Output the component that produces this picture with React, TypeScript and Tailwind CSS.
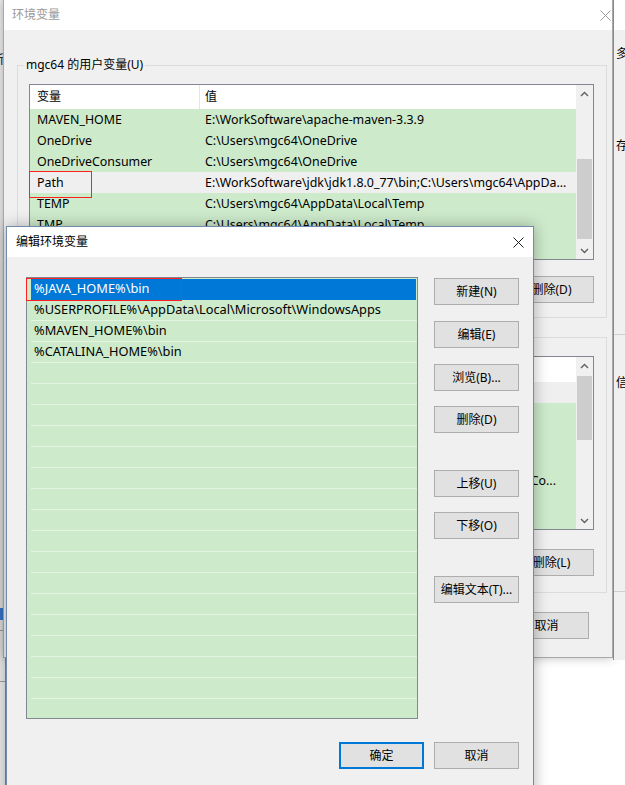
import React from 'react'

const FONT = "font-['Noto_Sans','Noto_Sans_CJK_SC',sans-serif]"

const userVars: [string, string][] = [
  ['MAVEN_HOME', 'E:\\WorkSoftware\\apache-maven-3.3.9'],
  ['OneDrive', 'C:\\Users\\mgc64\\OneDrive'],
  ['OneDriveConsumer', 'C:\\Users\\mgc64\\OneDrive'],
  ['Path', 'E:\\WorkSoftware\\jdk\\jdk1.8.0_77\\bin;C:\\Users\\mgc64\\AppDa...'],
  ['TEMP', 'C:\\Users\\mgc64\\AppData\\Local\\Temp'],
  ['TMP', 'C:\\Users\\mgc64\\AppData\\Local\\Temp'],
  ['', ''],
]

const pathEntries = [
  '%JAVA_HOME%\\bin',
  '%USERPROFILE%\\AppData\\Local\\Microsoft\\WindowsApps',
  '%MAVEN_HOME%\\bin',
  '%CATALINA_HOME%\\bin',
]

function Chevron({ dir }: { dir: 'up' | 'down' }) {
  return (
    <svg width="9" height="6" viewBox="0 0 9 6">
      <path
        d={dir === 'up' ? 'M1 5 L4.5 1.5 L8 5' : 'M1 1 L4.5 4.5 L8 1'}
        fill="none"
        stroke="#606060"
        strokeWidth="1.4"
      />
    </svg>
  )
}

function CloseX({ color }: { color: string }) {
  return (
    <svg width="11" height="11" viewBox="0 0 11 11">
      <path d="M0.5 0.5 L10.5 10.5 M10.5 0.5 L0.5 10.5" stroke={color} strokeWidth="1" />
    </svg>
  )
}

function Scrollbar({ thumbTop, thumbHeight }: { thumbTop: number; thumbHeight: number }) {
  return (
    <div className="flex w-[17px] shrink-0 flex-col bg-[#f0f0f0]">
      <div className="flex h-[17px] items-center justify-center">
        <Chevron dir="up" />
      </div>
      <div className="relative flex-1">
        <div
          className="absolute left-[1px] right-[1px] bg-[#cdcdcd]"
          style={{ top: thumbTop, height: thumbHeight }}
        />
      </div>
      <div className="flex h-[17px] items-center justify-center">
        <Chevron dir="down" />
      </div>
    </div>
  )
}

function WinButton({ label, className = '' }: { label: string; className?: string }) {
  return (
    <div
      className={`flex h-[27px] items-center justify-center border border-[#adadad] bg-[#e1e1e1] text-[12px] text-black ${className}`}
    >
      {label}
    </div>
  )
}

function EnvWindow() {
  return (
    <div className="absolute left-[3px] top-0 flex h-[658px] w-[610px] flex-col border-l border-r border-b border-[#a8a8a8] bg-[#f0f0f0] shadow-[0_0_10px_rgba(0,0,0,0.25)]">
      {/* title bar */}
      <div className="flex h-[30px] shrink-0 items-center justify-between bg-white pl-[8px] pr-[1px]">
        <span className="text-[12px] text-[#999999]">环境变量</span>
        <CloseX color="#9a9a9a" />
      </div>

      <div className="flex flex-col pl-[13px] pr-[5px] pt-[35px]">
        {/* user variables */}
        <div className="relative h-[253px] border border-[#dcdcdc] pl-[11px] pr-[12px] pt-[18px]">
          <span className="absolute -top-[9px] left-[6px] bg-[#f0f0f0] px-[2px] text-[12px] leading-[16px] text-black">
            mgc64 的用户变量(U)
          </span>
          <div className="flex h-[176px] border border-[#828790] bg-white">
            <div className="flex flex-1 flex-col overflow-hidden">
              <div className="flex h-[24px] shrink-0 items-center bg-white text-[12px] text-black">
                <div className="w-[170px] border-r border-[#e5e5e5] pl-[7px] leading-[24px]">变量</div>
                <div className="pl-[5px]">值</div>
              </div>
              <div className="flex-1 bg-[#cdeacb]">
                {userVars.map(([name, value], i) => (
                  <div
                    key={i}
                    className={`flex h-[21px] items-center whitespace-nowrap pt-[1px] text-[12.4px] text-black ${
                      name === 'Path' ? 'bg-[#efefef]' : 'bg-[#cdeacb]'
                    }`}
                  >
                    <div className="w-[170px] pl-[7px]">{name}</div>
                    <div className="pl-[5px]">{value}</div>
                  </div>
                ))}
              </div>
            </div>
            <Scrollbar thumbTop={57} thumbHeight={80} />
          </div>
          <div className="mt-[16px] flex justify-end">
            <WinButton label="删除(D)" className="h-[26px] w-[85px]" />
          </div>
        </div>

        {/* system variables */}
        <div className="relative mt-[19px] h-[256px] border border-[#dcdcdc] pl-[11px] pr-[12px] pt-[18px]">
          <span className="absolute -top-[9px] left-[6px] bg-[#f0f0f0] px-[2px] text-[12px] leading-[16px] text-black">
            系统变量(S)
          </span>
          <div className="flex h-[174px] border border-[#828790] bg-white">
            <div className="flex flex-1 flex-col overflow-hidden">
              <div className="h-[25px] shrink-0 bg-white" />
              <div className="h-[21px] shrink-0 bg-[#efefef]" />
              <div className="flex flex-1 items-center justify-end bg-[#cdeacb] pr-[20px] text-[12.4px] text-black">
                <span className="mt-[30px]">Co...</span>
              </div>
            </div>
            <Scrollbar thumbTop={2} thumbHeight={64} />
          </div>
          <div className="mt-[19px] flex justify-end">
            <WinButton label="删除(L)" className="h-[26px] w-[85px]" />
          </div>
        </div>

        <div className="mt-[19px] flex justify-end pr-[18px]">
          <WinButton label="取消" className="w-[85px]" />
        </div>
      </div>
    </div>
  )
}

function EditDialog() {
  const rows = Array.from({ length: 21 }, (_, i) => pathEntries[i] ?? '')
  return (
    <div className="absolute left-[6px] top-[226px] flex h-[580px] w-[528px] flex-col border border-[#6f8cab] bg-[#f0f0f0] shadow-[0_0_14px_rgba(0,0,0,0.3)]">
      <div className="flex h-[30px] shrink-0 items-center justify-between bg-white pl-[9px] pr-[9px]">
        <span className="text-[12px] text-black">编辑环境变量</span>
        <CloseX color="#202020" />
      </div>

      <div className="flex pl-[19px] pt-[20px]">
        <div className="h-[442px] w-[392px] overflow-hidden border border-[#828790] bg-[#cdeacb] pt-[1px]">
          {rows.map((text, i) => (
            <div
              key={i}
              className={`ml-[4px] flex h-[21px] items-center whitespace-nowrap border-b text-[12.8px] ${
                i === 0
                  ? 'mr-[1px] border-[#0078d7] bg-[#0078d7] pl-[3px] text-white'
                  : 'border-[#e4f5e2] pl-[3px] text-black'
              }`}
            >
              {text}
            </div>
          ))}
        </div>

        <div className="ml-[16px] flex w-[85px] flex-col pt-[1px]">
          <WinButton label="新建(N)" />
          <WinButton label="编辑(E)" className="mt-[16px]" />
          <WinButton label="浏览(B)..." className="mt-[16px]" />
          <WinButton label="删除(D)" className="mt-[15px]" />
          <WinButton label="上移(U)" className="mt-[37px]" />
          <WinButton label="下移(O)" className="mt-[15px]" />
          <WinButton label="编辑文本(T)..." className="mt-[37px]" />
        </div>
      </div>

      <div className="mt-[23px] flex justify-end gap-[10px] pr-[14px]">
        <div className="flex h-[27px] w-[85px] items-center justify-center border-2 border-[#0078d7] bg-[#e1e1e1] text-[12px] text-black">
          确定
        </div>
        <WinButton label="取消" className="w-[85px]" />
      </div>
    </div>
  )
}

export default function App() {
  return (
    <div className={`relative h-[785px] w-[625px] overflow-hidden bg-white ${FONT}`}>
      {/* window behind, left edge */}
      <div className="absolute left-0 top-0 flex h-[785px] w-[6px] flex-col overflow-hidden border-r border-[#8a8a8a] bg-[#e9e9e9]">
        <span className="mt-[52px] -ml-[8px] text-[12px] leading-[16px] text-black">新</span>
        <div className="mt-[540px] h-[12px] w-full bg-[#3a7bd5]" />
        <div className="mt-[10px] h-[1px] w-full bg-[#a0a0a0]" />
        <div className="mt-[50px] h-[1px] w-full bg-[#a0a0a0]" />
      </div>

      <EnvWindow />

      {/* window behind, right edge */}
      <div className="absolute left-[613px] top-0 flex h-[660px] w-[20px] flex-col overflow-hidden border-l border-[#8a8a8a] bg-[#f0f0f0]">
        <div className="h-[30px] bg-white" />
        <span className="ml-[2px] mt-[16px] text-[12px] leading-[16px] text-black">多</span>
        <span className="ml-[2px] mt-[76px] text-[12px] leading-[16px] text-black">存</span>
        <div className="mt-[180px] h-[1px] w-full bg-[#d0d0d0]" />
        <span className="ml-[2px] mt-[40px] text-[12px] leading-[16px] text-black">信</span>
        <div className="mt-[200px] h-[1px] w-full bg-[#d0d0d0]" />
      </div>

      <EditDialog />

      {/* red marks */}
      <div className="absolute left-[29px] top-[171px] z-10 h-[27px] w-[63px] border border-[#ff2020]" />
      <div className="absolute left-[26px] top-[278px] z-10 h-[23px] w-[156px] border border-[#ff2020]" />
    </div>
  )
}
